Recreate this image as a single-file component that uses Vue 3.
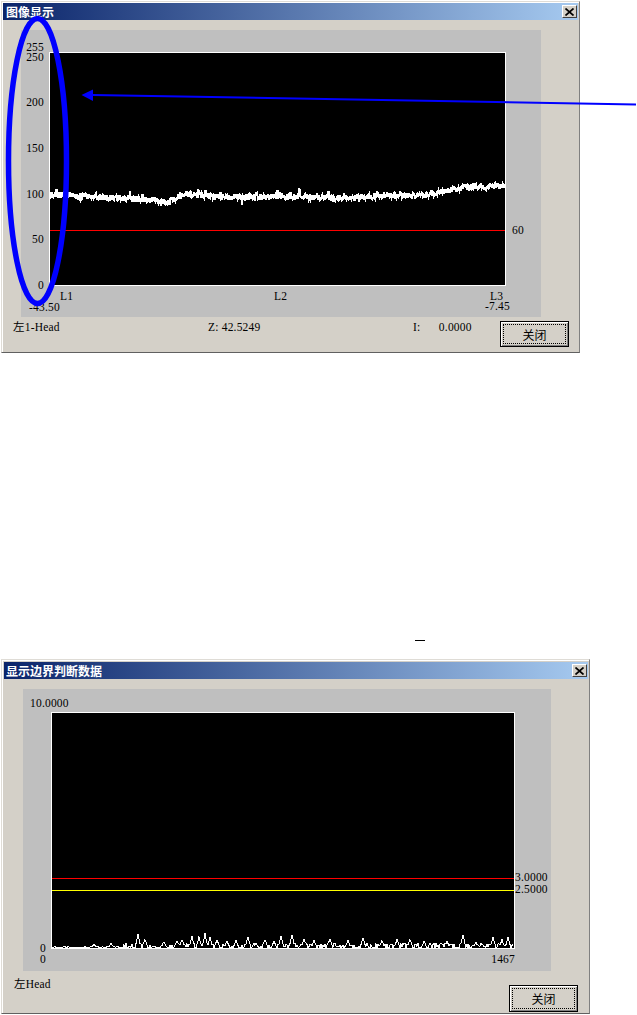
<script setup>
// small seeded random so both traces come out the same on every load
function seeded(seed) {
  let s = seed;
  return () => {
    s = (s * 1664525 + 1013904223) % 4294967296;
    return s / 4294967296;
  };
}

function interpolate(keys, x) {
  for (let i = 1; i < keys.length; i++) {
    if (x <= keys[i][0]) {
      const [x0, y0] = keys[i - 1];
      const [x1, y1] = keys[i];
      return y0 + ((y1 - y0) * (x - x0)) / (x1 - x0);
    }
  }
  return keys[keys.length - 1][1];
}

// profile trace of the first dialog, in plot coordinates
function profileTrace() {
  const rnd = seeded(7);
  const keys = [
    [0, 142], [8, 142], [14, 141], [30, 144], [70, 145], [100, 147], [115, 149],
    [122, 147], [135, 141], [170, 144], [250, 144], [300, 145], [340, 142],
    [365, 143], [385, 141], [395, 138], [415, 134], [435, 134], [455, 132],
  ];
  const pts = [];
  for (let x = 0; x <= 455; x += 0.5) {
    const spike = rnd() > 0.95 ? (rnd() - 0.5) * 14 : 0;
    pts.push(`${x},${(interpolate(keys, x) + (rnd() - 0.5) * 6 + spike).toFixed(1)}`);
  }
  return pts.join(" ");
}

// judgement data of the second dialog: [x, height] peaks above the baseline
function judgeTrace() {
  const rnd = seeded(23);
  const peaks = [
    [42, 4], [59, 5], [86, 14], [93, 9], [112, 6], [125, 8], [130, 9], [140, 12], [147, 12],
    [153, 15], [158, 11], [165, 9], [175, 7], [184, 8], [196, 12], [213, 9], [222, 7], [229, 12],
    [240, 14], [252, 9], [262, 8], [278, 10], [296, 8], [311, 11], [330, 8], [345, 9], [358, 9],
    [372, 7], [395, 7], [411, 14], [424, 6], [441, 11], [450, 9], [456, 11],
  ];
  const pts = ["0,235"];
  for (let x = 1; x < 462; x += 1) {
    let h = rnd() * (x < 70 ? 2 : 5) * (rnd() > 0.3 ? 1 : 0.1);
    for (const [px, ph] of peaks) {
      const d = Math.abs(x - px);
      if (d < 3) h = Math.max(h, ph * (1 - d / 3) * (0.9 + rnd() * 0.1));
    }
    pts.push(`${x},${(235 - h).toFixed(1)}`);
  }
  return pts.join(" ");
}

const windows = [
  {
    title: "图像显示",
    top: 0,
    width: 579,
    height: 352,
    pad: "1px",
    titleLeft: 3,
    panel: { w: 520, h: 287, ml: 18 },
    plot: { w: 457, h: 234, ml: 28, mt: 22 },
    labels: [
      { t: "255", x: 23, y: 17, end: true },
      { t: "250", x: 23, y: 27, end: true },
      { t: "200", x: 23, y: 72, end: true },
      { t: "150", x: 23, y: 118, end: true },
      { t: "100", x: 23, y: 164, end: true },
      { t: "50", x: 23, y: 209, end: true },
      { t: "0", x: 23, y: 255, end: true },
      { t: "L1", x: 39, y: 266 },
      { t: "L2", x: 253, y: 266 },
      { t: "L3", x: 469, y: 266 },
      { t: "-7.45", x: 464, y: 276 },
      { t: "-43.50", x: 8, y: 277 },
      { t: "60", x: 491, y: 200 },
    ],
    lines: [{ y: 177.5, color: "#ff0000" }],
    trace: profileTrace(),
    traceWidth: 2,
    columns: "195px 205px 87px 69px",
    status: ["左1-Head", "Z: 42.5249", "I:\u00a0\u00a0\u00a0\u00a0\u00a0\u00a00.0000"],
    statusTop: 3,
    buttonTop: 4,
    buttonH: 26,
  },
  {
    title: "显示边界判断数据",
    top: 306,
    width: 589,
    height: 355,
    pad: "2px 1px 1px 2px",
    titleLeft: 2,
    panel: { w: 528, h: 282, ml: 19 },
    plot: { w: 464, h: 237, ml: 28, mt: 23 },
    labels: [
      { t: "10.0000", x: 7, y: 14 },
      { t: "0", x: 23, y: 259, end: true },
      { t: "0", x: 23, y: 270, end: true },
      { t: "1467", x: 492, y: 270, end: true },
      { t: "3.0000", x: 492, y: 188 },
      { t: "2.5000", x: 492, y: 200 },
    ],
    lines: [
      { y: 165.5, color: "#ff0000" },
      { y: 177.5, color: "#ffff00" },
    ],
    trace: judgeTrace(),
    traceWidth: 1,
    columns: "495px 69px",
    status: ["左Head"],
    statusTop: 6,
    buttonTop: 14,
    buttonH: 27,
  },
];

function labelStyle(l) {
  return {
    left: l.x + "px",
    top: l.y + "px",
    transform: l.end ? "translate(-100%, -50%)" : "translateY(-50%)",
  };
}
</script>

<template>
  <div class="page">
    <section
      v-for="win in windows"
      :key="win.title"
      class="window"
      :style="{ width: win.width + 'px', height: win.height + 'px', marginTop: win.top + 'px', padding: win.pad }"
    >
      <header class="titlebar" :style="{ paddingLeft: win.titleLeft + 'px' }">
        <span class="title">{{ win.title }}</span>
        <button class="close" type="button" aria-label="关闭">
          <svg width="9" height="8" viewBox="0 0 9 8">
            <path d="M0.5 0.5 L8.5 7.5 M8.5 0.5 L0.5 7.5" stroke="#000" stroke-width="1.7" fill="none" />
          </svg>
        </button>
      </header>
      <div class="body">
        <div
          class="panel"
          :style="{ width: win.panel.w + 'px', height: win.panel.h + 'px', marginLeft: win.panel.ml + 'px' }"
        >
          <div
            class="plot"
            :style="{
              width: win.plot.w + 'px',
              height: win.plot.h + 'px',
              marginLeft: win.plot.ml + 'px',
              marginTop: win.plot.mt + 'px',
            }"
          >
            <svg class="plot-svg" :viewBox="`0 0 ${win.plot.w - 2} ${win.plot.h - 2}`">
              <polyline :points="win.trace" class="trace" :stroke-width="win.traceWidth" />
              <line
                v-for="ln in win.lines"
                :key="ln.color"
                x1="0"
                :x2="win.plot.w"
                :y1="ln.y"
                :y2="ln.y"
                :stroke="ln.color"
                stroke-width="1"
              />
            </svg>
          </div>
          <span v-for="(l, i) in win.labels" :key="i" class="label" :style="labelStyle(l)">{{ l.t }}</span>
        </div>
        <footer class="footer" :style="{ gridTemplateColumns: win.columns }">
          <span
            v-for="s in win.status"
            :key="s"
            class="status"
            :style="{ paddingTop: win.statusTop + 'px' }"
          >{{ s }}</span>
          <button
            class="dlg-btn"
            type="button"
            :style="{ marginTop: win.buttonTop + 'px', height: win.buttonH + 'px' }"
          >
            <span class="focus">关闭</span>
          </button>
        </footer>
      </div>
    </section>

    <!-- blue annotations drawn on top of the screenshots -->
    <svg class="notes" width="637" height="1015" viewBox="0 0 637 1015">
      <ellipse cx="37.5" cy="161" rx="29" ry="142.5" fill="none" stroke="#0000ff" stroke-width="5.5" />
      <line x1="636" y1="104.5" x2="92" y2="95" stroke="#0000ff" stroke-width="2" />
      <polygon points="81.5,95 93,89.5 93,101" fill="#0000ff" />
      <line x1="415" y1="640.5" x2="425" y2="640.5" stroke="#000" stroke-width="1" />
    </svg>
  </div>
</template>

<style scoped>
.page {
  position: relative;
  width: 637px;
  height: 1015px;
  padding: 1px 0 0 1px;
  box-sizing: border-box;
  overflow: hidden;
}

.window {
  box-sizing: border-box;
  display: flex;
  flex-direction: column;
  background: #d4d0c8;
  border-top: 1px solid #dfdcd6;
  border-left: 1px solid #dfdcd6;
  border-right: 1px solid #808080;
  border-bottom: 1px solid #606060;
  box-shadow: inset 1px 1px 0 #fff;
}

.titlebar {
  flex: none;
  height: 17px;
  display: flex;
  align-items: center;
  justify-content: space-between;
  padding-right: 1px;
  background: linear-gradient(90deg, #0a246a, #a6caf0);
}

.title {
  color: #fff;
  font: bold 12px "Noto Sans CJK SC", sans-serif;
}

.close {
  width: 15px;
  height: 13px;
  padding: 0;
  display: flex;
  align-items: center;
  justify-content: center;
  background: #d4d0c8;
  border: 1px solid;
  border-color: #fff #404040 #404040 #fff;
}

.body {
  flex: 1;
  padding-top: 10px;
}

.panel {
  position: relative;
  display: flow-root;
  background: #bfbfbf;
}

.plot {
  box-sizing: border-box;
  background: #000;
  border: 1px solid #fff;
}

.plot-svg {
  display: block;
  width: 100%;
  height: 100%;
}

.trace {
  fill: none;
  stroke: #fff;
  shape-rendering: crispEdges;
}

.label,
.status {
  font: 11.5px/14px "Liberation Serif", "Noto Sans CJK SC", serif;
  letter-spacing: 0.2px;
  color: #000;
  white-space: nowrap;
}

.label {
  position: absolute;
}

.footer {
  display: grid;
  padding-left: 10px;
  align-items: start;
}

.footer .dlg-btn {
  grid-column: -2;
}

.dlg-btn {
  box-sizing: border-box;
  width: 69px;
  padding: 2px;
  background: #d4d0c8;
  border: 1px solid #000;
  box-shadow: inset 1px 1px 0 #fff, inset -1px -1px 0 #808080;
}

.focus {
  display: flex;
  align-items: center;
  justify-content: center;
  height: 100%;
  font: 12px "Noto Sans CJK SC", sans-serif;
  color: #000;
  outline: 1px dotted #000;
  outline-offset: -1px;
}

.notes {
  position: absolute;
  left: 0;
  top: 0;
  pointer-events: none;
}
</style>

<style>
html,
body {
  margin: 0;
  background: #fff;
}
</style>
